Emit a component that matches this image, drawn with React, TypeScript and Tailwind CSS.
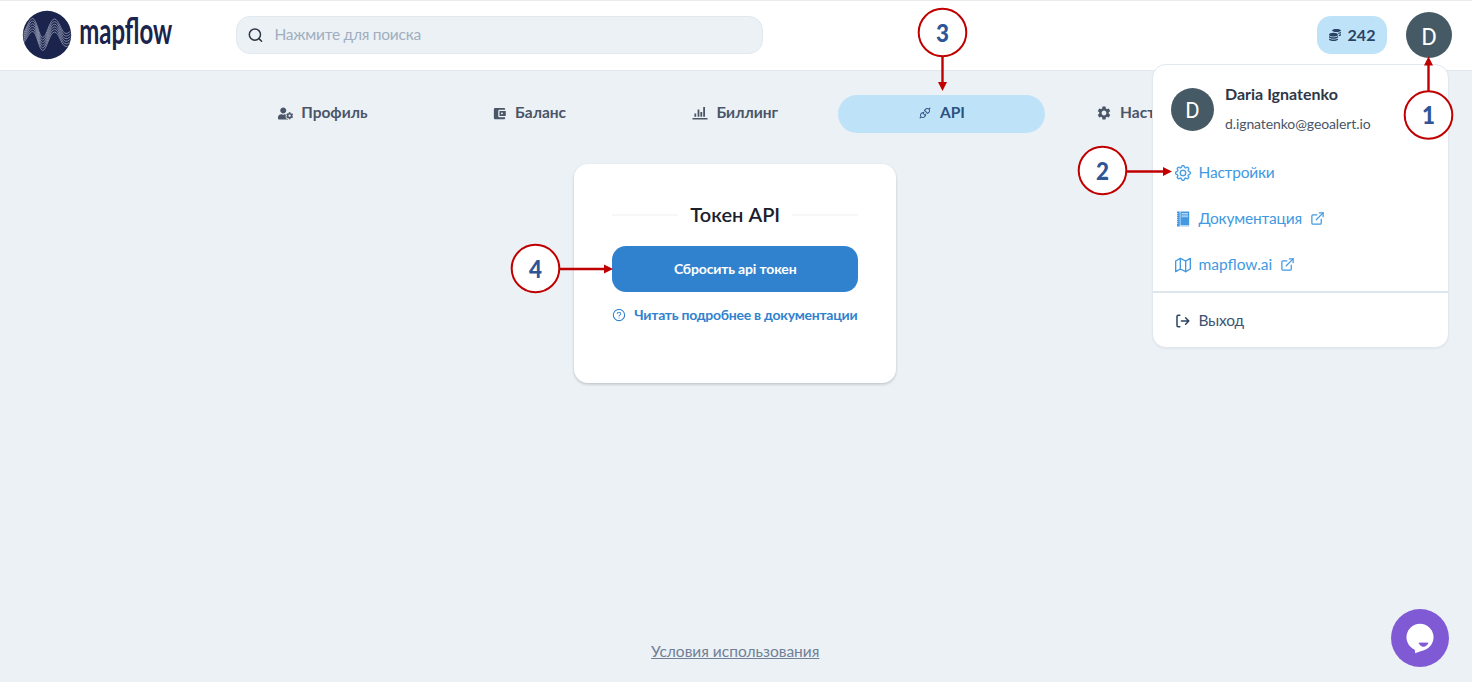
import type { ReactNode } from "react";
import { FaUserCog, FaCoins } from "react-icons/fa";
import { MdAccountBalanceWallet, MdSettings } from "react-icons/md";
import { AiOutlineApi, AiOutlineQuestionCircle } from "react-icons/ai";
import { BsGear } from "react-icons/bs";
import { FiMap, FiExternalLink } from "react-icons/fi";

const WAVES = [0, 1, 2, 3, 4, 5];

function Logo() {
  return (
    <svg width="156" height="52" viewBox="0 0 156 52" className="shrink-0 overflow-visible" aria-label="mapflow">
      <defs>
        <clipPath id="disc">
          <circle cx="25" cy="26" r="23.8" />
        </clipPath>
      </defs>
      <circle cx="25" cy="26" r="24.2" fill="#1a244d" />
      <g clipPath="url(#disc)" fill="none" stroke="#c3c8d8" strokeWidth="0.6">
        {WAVES.map((i) => {
          const shift = i * 2.6;
          const top = 9.5 + shift;
          const dip = 28.5 + shift;
          const low = 24.5 + shift;
          const edge = 26 + i * 2;
          return (
            <path
              key={i}
              d={`M0 ${edge} C4 ${edge - 4} 7 ${top} 10.7 ${top} C14.7 ${top} 17 ${dip} 20.7 ${dip} C24.7 ${dip} 27.5 ${top + 0.5} 32.5 ${top + 0.5} C37 ${top + 0.5} 39.5 ${low} 44 ${low} C46.5 ${low} 48 ${low - 2} 50 ${low - 4}`}
            />
          );
        })}
      </g>
      <text
        x="57.3"
        y="35.2"
        textLength="93"
        lengthAdjust="spacingAndGlyphs"
        fontFamily="Lato, sans-serif"
        fontWeight="700"
        fontSize="36"
        fill="#1a244d"
      >
        mapflow
      </text>
    </svg>
  );
}

function SearchIcon() {
  return (
    <svg width="16" height="16" viewBox="0 0 16 16" fill="none" stroke="#2d3748" strokeWidth="1.5" className="shrink-0">
      <circle cx="6.9" cy="7.6" r="5.6" />
      <path d="M10.9 11.6 L13.6 14.2" strokeLinecap="round" />
    </svg>
  );
}

function ChartIcon() {
  return (
    <svg width="16" height="14" viewBox="0 0 16 14" fill="#4a5568" className="shrink-0">
      <path d="M0.5 12h15v1.5h-15zM2.4 7.6h1.8v3.2H2.4zM5.6 3.4h1.8v7.4H5.6zM8.4 6h1.8v4.8H8.4zM11.2 1h1.8v9.8h-1.8z" />
    </svg>
  );
}

function BookIcon() {
  return (
    <svg width="16" height="16" viewBox="0 0 16 16" className="shrink-0">
      <path d="M2 0.5h2.8v15H2z" fill="#4299e1" />
      <path d="M2 2.5h1.2M2 4.5h1.2M2 6.5h1.2M2 8.5h1.2M2 10.5h1.2M2 12.5h1.2" stroke="#ffffff" strokeWidth="0.6" />
      <path d="M5.4 0.5h8.8v13.8H5.4z" fill="#4299e1" />
      <path d="M5.4 15h8.8" stroke="#90c4ee" strokeWidth="0.9" />
      <path d="M6.6 2.5h6.4M6.6 4.1h6.4M6.6 5.7h6.4" stroke="#d4e9fa" strokeWidth="0.8" />
    </svg>
  );
}

function ExitIcon() {
  return (
    <svg
      width="16"
      height="16"
      viewBox="0 0 16 16"
      fill="none"
      stroke="#2a4365"
      strokeWidth="1.5"
      strokeLinecap="round"
      strokeLinejoin="round"
      className="shrink-0"
    >
      <path d="M4.8 2.2H3.2a1.2 1.2 0 0 0-1.2 1.2v9.2a1.2 1.2 0 0 0 1.2 1.2h1.6M6.4 8h7.4M10.6 4.8l3.2 3.2-3.2 3.2" />
    </svg>
  );
}

function Tab({ icon, label, active = false }: { icon: ReactNode; label: string; active?: boolean }) {
  return (
    <div
      className={
        active
          ? "flex h-[38px] flex-1 items-center justify-center gap-2 rounded-[19px] bg-[#bee3f8] pb-px text-[#2c5282]"
          : "flex h-[38px] flex-1 items-center justify-center gap-2 pb-px text-[#4a5568]"
      }
    >
      {icon}
      <span className="text-[15.5px] font-bold">{label}</span>
    </div>
  );
}

function MenuLink({ icon, label, external = false, tracking = "" }: { icon: ReactNode; label: string; external?: boolean; tracking?: string }) {
  return (
    <div className="flex h-[46px] items-center pl-[22px] text-[#4299e1]">
      {icon}
      <span className={`ml-[7.5px] text-[15.5px] ${tracking}`}>{label}</span>
      {external && <FiExternalLink size={15} strokeWidth={2} className="ml-2" />}
    </div>
  );
}

function Marker({ n, cx, cy, line, head }: { n: string; cx: number; cy: number; line: string; head: string }) {
  return (
    <g>
      <path d={line} stroke="#c00000" strokeWidth="2.4" />
      <path d={head} fill="#c00000" />
      <circle cx={cx} cy={cy} r="23.8" fill="#ffffff" stroke="#c00000" strokeWidth="2" />
      <text
        x={cx - 6.5}
        y={cy + 9.2}
        textLength="13"
        lengthAdjust="spacingAndGlyphs"
        fontFamily="Lato, sans-serif"
        fontWeight="900"
        fontSize="25"
        fill="#2f5597"
      >
        {n}
      </text>
    </g>
  );
}

export default function App() {
  return (
    <div className="relative flex h-[682px] w-[1472px] flex-col overflow-hidden bg-[#ebf1f5] font-['Lato',sans-serif]">
      <header className="flex h-[71px] shrink-0 items-center border-t border-b border-t-[#ebebeb] border-b-[#e2e8f0] bg-white pb-px pl-[22px]">
        <Logo />
        <div className="ml-[58px] flex h-[38px] w-[527px] items-center rounded-[14px] border border-[#e2e8f0] bg-[#ebf1f5] pl-[11px]">
          <SearchIcon />
          <span className="ml-[10.5px] text-[15.5px] tracking-[-0.25px] text-[#a0aec0]">Нажмите для поиска</span>
        </div>
        <div className="ml-[554px] flex h-[38px] w-[70px] items-center justify-center gap-[7px] rounded-[14px] bg-[#bee3f8] text-[#2a4365]">
          <FaCoins size={12} />
          <span className="text-base font-bold">242</span>
        </div>
        <div className="ml-[19px] flex size-[46px] items-center justify-center rounded-full bg-[#455a64] pt-[3px] font-['Roboto',sans-serif] text-[24px] text-white">
          D
        </div>
      </header>

      <main className="flex flex-1 flex-col items-center pr-[1.5px]">
        <nav className="mt-[23.5px] flex w-[1031px]">
          <Tab icon={<FaUserCog size={15} />} label="Профиль" />
          <Tab icon={<MdAccountBalanceWallet size={15} />} label="Баланс" />
          <Tab icon={<ChartIcon />} label="Биллинг" />
          <Tab icon={<AiOutlineApi size={14} />} label="API" active />
          <Tab icon={<MdSettings size={16} />} label="Настройки" />
        </nav>

        <section className="mt-[31px] flex h-[219px] w-[322px] flex-col rounded-[14px] bg-white px-[38px] pt-[37px] shadow-[0_1px_3px_rgba(0,0,0,0.12),0_2px_3px_rgba(0,0,0,0.08)]">
          <div className="flex h-7 items-center gap-3">
            <div className="mt-px h-0.5 flex-1 bg-[#f7f7f7]" />
            <h1 className="pb-0.5 text-xl font-semibold text-[#1a202c]">Токен API</h1>
            <div className="mt-px h-0.5 flex-1 bg-[#f7f7f7]" />
          </div>
          <button className="mt-[17px] h-[46px] rounded-[14px] bg-[#3182ce] text-sm font-bold tracking-[-0.16px] text-white">
            Сбросить api токен
          </button>
          <a className="mt-[13px] flex items-center gap-2 text-sm font-bold tracking-[-0.26px] whitespace-nowrap text-[#3182ce]">
            <AiOutlineQuestionCircle size={14} className="shrink-0" />
            Читать подробнее в документации
          </a>
        </section>

        <a className="mt-auto mb-5 text-[15.5px] leading-[22px] text-[#718096] underline">Условия использования</a>
      </main>

      <aside className="absolute top-16 left-[1152px] flex h-[284px] w-[297px] flex-col rounded-[14px] border border-[#e2e8f0] bg-white shadow-[0_1px_2px_rgba(0,0,0,0.05)]">
        <div className="flex h-[84px] shrink-0 items-center gap-[11px] pt-1 pl-[18px]">
          <div className="flex size-[43px] items-center justify-center rounded-full bg-[#455a64] pt-0.5 font-['Roboto',sans-serif] text-[22px] text-white">
            D
          </div>
          <div className="flex flex-col gap-1.5">
            <span className="text-base leading-6 font-bold text-[#2d3748]">Daria Ignatenko</span>
            <span className="text-sm leading-6 tracking-[-0.1px] text-[#4a5568]">d.ignatenko@geoalert.io</span>
          </div>
        </div>
        <div className="flex h-[144px] shrink-0 flex-col border-b-2 border-[#dde5ed] pt-[0.5px]">
          <MenuLink icon={<BsGear size={16} strokeWidth={0.35} />} label="Настройки" tracking="tracking-[-0.2px]" />
          <MenuLink icon={<BookIcon />} label="Документация" tracking="tracking-[-0.2px]" external />
          <MenuLink icon={<FiMap size={16} strokeWidth={2} />} label="mapflow.ai" external />
        </div>
        <div className="flex flex-1 items-center gap-[7.5px] pt-px pl-[22px] text-[15.5px] tracking-[-0.25px] text-[#3c5373]">
          <ExitIcon />
          Выход
        </div>
      </aside>

      <svg width="1472" height="682" viewBox="0 0 1472 682" className="pointer-events-none absolute inset-0">
        <Marker n="1" cx={1428.5} cy={115} line="M1428.5 92V63" head="M1424 65.5h9l-4.5-9z" />
        <Marker n="2" cx={1102.5} cy={170.5} line="M1126 171.5H1165" head="M1163 167v9l9-4.5z" />
        <Marker n="3" cx={942.5} cy={32.5} line="M942.5 56V84" head="M938 82h9l-4.5 9z" />
        <Marker n="4" cx={535.5} cy={268.5} line="M559 269H606" head="M604 264.5v9l9-4.5z" />
      </svg>

      <button className="absolute top-[609px] left-[1391px] flex size-[57.5px] items-center justify-center rounded-full bg-[#805ad5]">
        <svg width="30" height="32" viewBox="0 0 30 32">
          <circle cx="15" cy="15.3" r="13.5" fill="#ffffff" />
          <path d="M9.6 26 L10.2 31.2 L19 28 z" fill="#ffffff" />
          <path d="M13.9 21h9.2q-1.6 3.4-4.6 3.4t-4.6-3.4z" fill="#805ad5" stroke="#805ad5" strokeWidth="0.8" strokeLinejoin="round" />
        </svg>
      </button>
    </div>
  );
}
